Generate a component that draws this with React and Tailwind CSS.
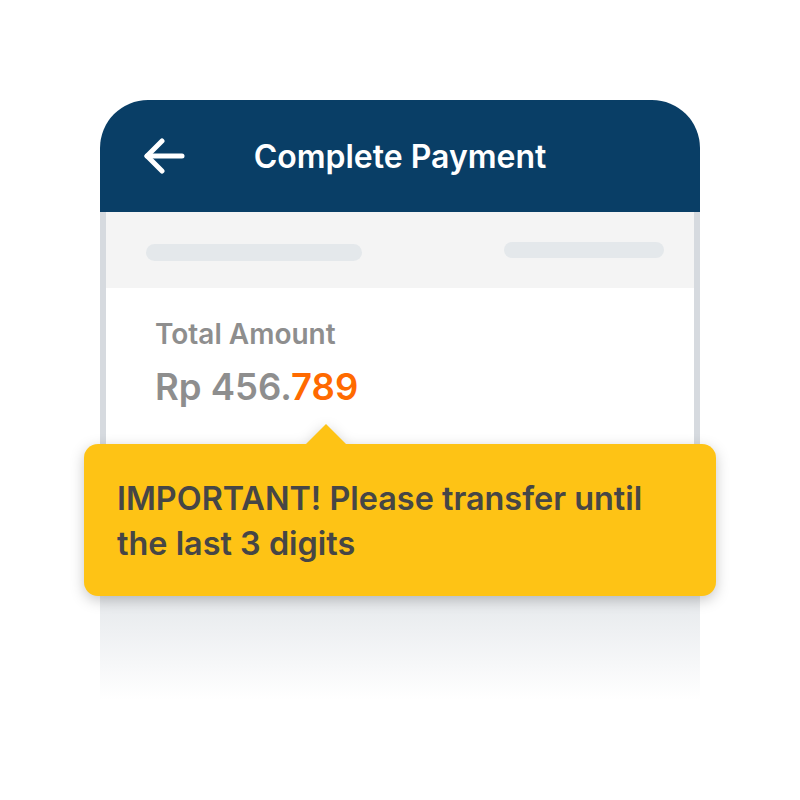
function BackArrow() {
    return (
        <svg width="44" height="36" viewBox="0 0 44 36" fill="none" stroke="white" strokeWidth="5" strokeLinecap="round" strokeLinejoin="round">
            <path d="M5 18H40" />
            <path d="M20 3L5 18L20 33" />
        </svg>
    );
}

export default function App() {
    return (
        <div className="w-[800px] h-[800px] bg-white font-['Inter',sans-serif] pt-[100px]">
            <div className="w-[600px] mx-auto flex flex-col">
                {/* header */}
                <div className="h-[112px] bg-[#093E66] rounded-t-[48px] relative flex items-center justify-center">
                    <div className="absolute left-[42px] top-[38px]">
                        <BackArrow />
                    </div>
                    <p className="text-white text-[32px] font-semibold leading-none mt-[2px]">Complete Payment</p>
                </div>

                {/* skeleton strip */}
                <div className="h-[76px] bg-[#F4F4F4] border-x-[6px] border-[#D6DADF] flex justify-between pl-[40px] pr-[30px] pt-[30px]">
                    <div className="w-[216px] h-[17px] rounded-full bg-[#E4E8EB] mt-[2px]" />
                    <div className="w-[160px] h-[16px] rounded-full bg-[#E4E8EB]" />
                </div>

                {/* amount */}
                <div className="h-[156px] bg-white border-x-[6px] border-[#D6DADF] pl-[49px] pt-[32px]">
                    <p className="text-[28px] leading-[28px] font-semibold text-[#8E8E8E]">Total Amount</p>
                    <p className="text-[36.5px] leading-[38px] font-semibold text-[#8E8E8E] mt-[20px]">
                        Rp 456.<span className="text-[#FF6A00]">789</span>
                    </p>
                </div>

                {/* tooltip */}
                <div className="relative -mx-4 z-10 drop-shadow-[0_4px_7px_rgba(0,0,0,0.22)]">
                    <div className="absolute left-[221px] top-[-20px] w-0 h-0 border-x-[21px] border-x-transparent border-b-[21px] border-b-[#FEC315]" />
                    <div className="bg-[#FEC315] rounded-[14px] h-[152px] pl-[33px] pr-[20px] pt-[32px]">
                        <p className="text-[32.4px] leading-[45px] font-semibold text-[#464646]">
                            IMPORTANT! Please transfer until
                            <br />
                            the last 3 digits
                        </p>
                    </div>
                </div>

                {/* fade */}
                <div className="h-[104px] bg-linear-to-b from-[#E6E9EC] to-white" />
            </div>
        </div>
    );
}
